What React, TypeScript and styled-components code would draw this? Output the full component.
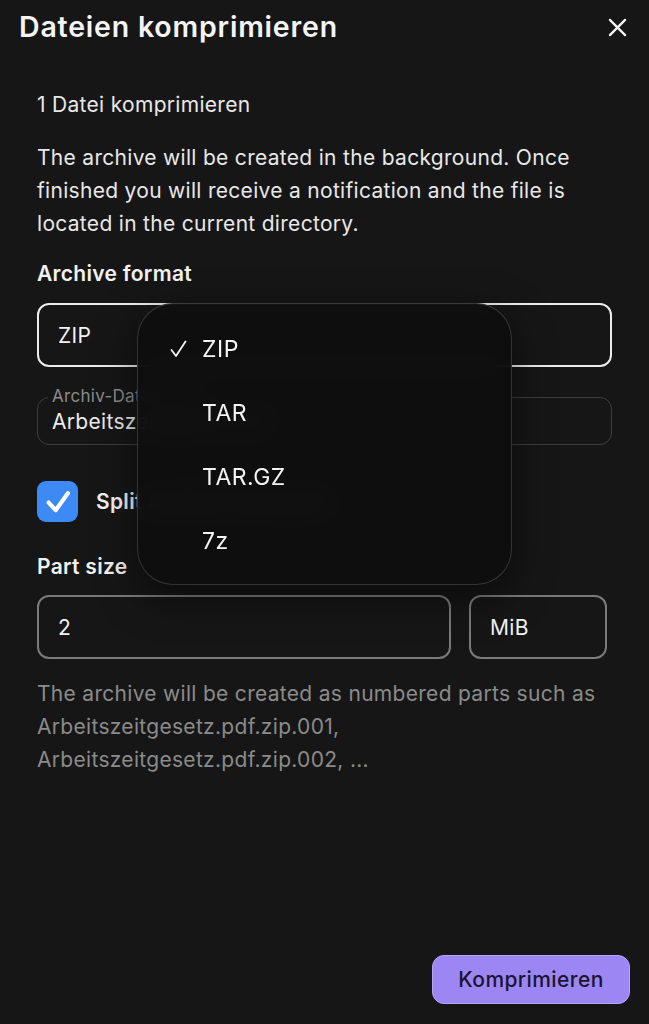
import styled, { createGlobalStyle } from "styled-components";

const GlobalStyle = createGlobalStyle`
  html, body {
    margin: 0;
    padding: 0;
    background: #161616;
  }
  body {
    font-family: Inter, "Liberation Sans", sans-serif;
    color: #f2f2f2;
    -webkit-font-smoothing: antialiased;
  }
`;

const Page = styled.div`
  display: flex;
  flex-direction: column;
  width: 649px;
  height: 1024px;
  background: #161616;
  box-sizing: border-box;
`;

const Header = styled.div`
  display: flex;
  align-items: center;
  justify-content: space-between;
  padding: 10px 18px 0 19px;

  h1 {
    margin: 0;
    font-size: 28.5px;
    line-height: 34px;
    font-weight: 600;
    letter-spacing: 0.8px;
    color: #f4f4f4;
  }
`;

const CloseButton = styled.button`
  display: flex;
  align-items: center;
  justify-content: center;
  width: 28px;
  height: 28px;
  padding: 0;
  border: none;
  background: none;
  color: #f4f4f4;
`;

const Content = styled.div`
  display: flex;
  flex-direction: column;
  padding: 44px 37px 0;
  font-size: 21px;
  line-height: 33px;
  letter-spacing: 0.3px;
`;

const Text = styled.p<{ $top: number; $muted?: boolean }>`
  margin: ${(p) => p.$top}px 0 0;
  color: ${(p) => (p.$muted ? "#8b8b8b" : "#e8e8e8")};
`;

const Label = styled.div<{ $top: number }>`
  margin-top: ${(p) => p.$top}px;
  font-weight: 600;
  color: #f2f2f2;
`;

const SelectWrap = styled.div`
  position: relative;
  margin-top: 13px;
`;

const Field = styled.div<{ $strong?: boolean }>`
  display: flex;
  align-items: center;
  height: 64px;
  box-sizing: border-box;
  padding: 0 19px;
  border: 2px solid ${(p) => (p.$strong ? "#ececec" : "#7a7a7a")};
  border-radius: 12px;
  color: #f2f2f2;
`;

const Menu = styled.div`
  position: absolute;
  left: 100px;
  top: 0;
  width: 375px;
  height: 282px;
  box-sizing: border-box;
  padding: 13px 0;
  border-radius: 36px;
  border: 1px solid rgba(255, 255, 255, 0.16);
  background: rgba(14, 14, 14, 0.94);
  backdrop-filter: blur(14px);
  box-shadow: 0 12px 40px rgba(0, 0, 0, 0.5);
  z-index: 2;
`;

const MenuItem = styled.div`
  display: flex;
  align-items: center;
  height: 64px;
  padding-left: 32px;
  font-size: 23px;
  letter-spacing: 0.5px;
  color: #f4f4f4;
`;

const CheckSlot = styled.span`
  display: inline-flex;
  width: 32px;
`;

const OutlinedField = styled.div`
  position: relative;
  margin-top: 30px;
  height: 48px;
  box-sizing: border-box;
  display: flex;
  align-items: center;
  padding: 0 14px;
  border: 1px solid #3e3e3e;
  border-radius: 12px;
  color: #ececec;

  span {
    position: absolute;
    left: 10px;
    top: -13px;
    padding: 0 4px;
    background: #161616;
    font-size: 17px;
    line-height: 22px;
    color: #8b8b8b;
  }
`;

const CheckRow = styled.div`
  display: flex;
  align-items: center;
  gap: 18px;
  margin-top: 36px;
  font-weight: 600;
`;

const Checkbox = styled.div`
  display: flex;
  align-items: center;
  justify-content: center;
  width: 41px;
  height: 41px;
  border-radius: 9px;
  background: #3d8af7;
`;

const SizeRow = styled.div`
  display: grid;
  grid-template-columns: 1fr 138px;
  gap: 18px;
  margin-top: 12px;
  margin-right: 5px;
`;

const Footer = styled.div`
  display: flex;
  justify-content: flex-end;
  margin-top: auto;
  padding: 0 19px 20px;
`;

const PrimaryButton = styled.button`
  width: 198px;
  height: 49px;
  border-radius: 12px;
  border: 1.5px solid #b5a6fb;
  background: #9b86f4;
  color: #1a1430;
  font-family: Inter, "Liberation Sans", sans-serif;
  font-size: 21px;
  letter-spacing: 0.4px;
  font-weight: 500;
`;

const formats = ["ZIP", "TAR", "TAR.GZ", "7z"];

export default function App() {
  return (
    <Page>
      <GlobalStyle />
      <Header>
        <h1>Dateien komprimieren</h1>
        <CloseButton aria-label="Schließen">
          <svg width="19" height="19" viewBox="0 0 20 20" fill="none">
            <path d="M2 2L18 18M18 2L2 18" stroke="currentColor" strokeWidth="2.4" strokeLinecap="round" />
          </svg>
        </CloseButton>
      </Header>
      <Content>
        <Text $top={0}>1 Datei komprimieren</Text>
        <Text $top={20}>
          The archive will be created in the background. Once finished you will receive a notification and the file is
          located in the current directory.
        </Text>
        <Label $top={17}>Archive format</Label>
        <SelectWrap>
          <Field $strong>ZIP</Field>
          <Menu>
            {formats.map((f, i) => (
              <MenuItem key={f}>
                <CheckSlot>
                  {i === 0 && (
                    <svg width="17" height="18" viewBox="0 0 17 18" fill="none">
                      <path d="M1.5 10L6 16L15.5 1.5" stroke="#f4f4f4" strokeWidth="1.8" strokeLinecap="round" strokeLinejoin="round" />
                    </svg>
                  )}
                </CheckSlot>
                {f}
              </MenuItem>
            ))}
          </Menu>
        </SelectWrap>
        <OutlinedField>
          <span>Archiv-Dateiname</span>
          Arbeitszeitgesetz.pdf
        </OutlinedField>
        <CheckRow>
          <Checkbox>
            <svg width="28" height="28" viewBox="0 0 24 24" fill="none">
              <path d="M4 12.5L10 19L20.5 4.5" stroke="#fff" strokeWidth="3.6" strokeLinecap="round" strokeLinejoin="round" />
            </svg>
          </Checkbox>
          Split archive into parts
        </CheckRow>
        <Label $top={28}>Part size</Label>
        <SizeRow>
          <Field>2</Field>
          <Field>MiB</Field>
        </SizeRow>
        <Text $top={18} $muted>
          The archive will be created as numbered parts such as Arbeitszeitgesetz.pdf.zip.001,
          Arbeitszeitgesetz.pdf.zip.002, ...
        </Text>
      </Content>
      <Footer>
        <PrimaryButton>Komprimieren</PrimaryButton>
      </Footer>
    </Page>
  );
}
